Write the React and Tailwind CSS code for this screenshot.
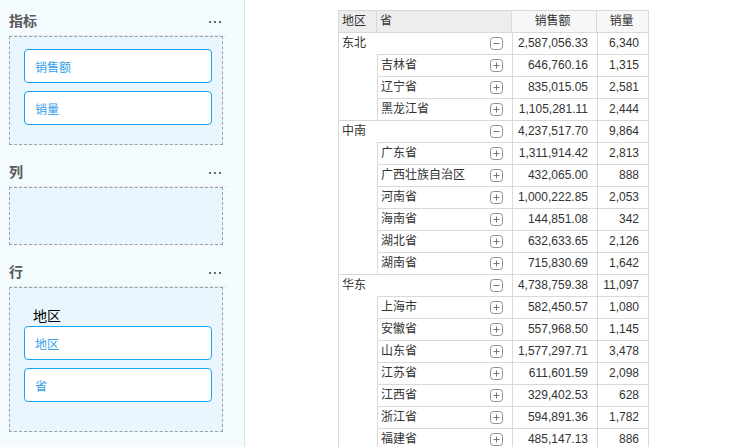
import React from "react";

const FONT = { fontFamily: '"Liberation Sans", "Noto Sans CJK SC", sans-serif' };

const data = [
  {
    name: "东北", sales: "2,587,056.33", qty: "6,340",
    children: [
      ["吉林省", "646,760.16", "1,315"],
      ["辽宁省", "835,015.05", "2,581"],
      ["黑龙江省", "1,105,281.11", "2,444"],
    ],
  },
  {
    name: "中南", sales: "4,237,517.70", qty: "9,864",
    children: [
      ["广东省", "1,311,914.42", "2,813"],
      ["广西壮族自治区", "432,065.00", "888"],
      ["河南省", "1,000,222.85", "2,053"],
      ["海南省", "144,851.08", "342"],
      ["湖北省", "632,633.65", "2,126"],
      ["湖南省", "715,830.69", "1,642"],
    ],
  },
  {
    name: "华东", sales: "4,738,759.38", qty: "11,097",
    children: [
      ["上海市", "582,450.57", "1,080"],
      ["安徽省", "557,968.50", "1,145"],
      ["山东省", "1,577,297.71", "3,478"],
      ["江苏省", "611,601.59", "2,098"],
      ["江西省", "329,402.53", "628"],
      ["浙江省", "594,891.36", "1,782"],
      ["福建省", "485,147.13", "886"],
    ],
  },
];

function Toggle({ plus }) {
  return (
    <svg width="13" height="13" viewBox="0 0 13 13" className="shrink-0">
      <rect x="0.5" y="0.5" width="12" height="12" rx="3" fill="white" stroke="#8f8f8f" />
      <line x1="3.5" y1="6.5" x2="9.5" y2="6.5" stroke="#777" />
      {plus && <line x1="6.5" y1="3.5" x2="6.5" y2="9.5" stroke="#777" />}
    </svg>
  );
}

function Dots() {
  return (
    <div className="flex gap-[3px] mb-[5px]">
      <span className="w-[2px] h-[2px] bg-[#666]" />
      <span className="w-[2px] h-[2px] bg-[#666]" />
      <span className="w-[2px] h-[2px] bg-[#666]" />
    </div>
  );
}

function SectionHeader({ title }) {
  return (
    <div className="w-[218px] h-[35px] flex items-end justify-between pb-[7px] pr-[6px] border-b border-[#e4eaee]">
      <span className="text-[14px] leading-[14px] font-bold text-[#595959]">{title}</span>
      <Dots />
    </div>
  );
}

function Item({ label }) {
  return (
    <div className="h-[34px] w-[188px] bg-white border border-[#17a2f0] rounded-[4px] flex items-center pl-[10px] pt-[3px] text-[12px] text-[#36a0ea]">
      {label}
    </div>
  );
}

export default function App() {
  return (
    <div className="h-[447px] w-[732px] overflow-hidden flex bg-white text-[#333]" style={FONT}>
      {/* Left panel */}
      <div className="w-[245px] h-full shrink-0 bg-[#f4fbff] border-r border-[#dde4ea] pl-[9px] pt-[1px]">
        <SectionHeader title="指标" />
        <div className="w-[214px] border border-dashed border-[#9aa0a6] bg-[#eaf6fe] pt-[12px] pb-[19px] pl-[14px] flex flex-col gap-[8px]">
          <Item label="销售额" />
          <Item label="销量" />
        </div>

        <div className="mt-[7px]">
          <SectionHeader title="列" />
        </div>
        <div className="w-[214px] h-[58px] border border-dashed border-[#9aa0a6] bg-[#eaf6fe]" />

        <div className="mt-[7px]">
          <SectionHeader title="行" />
        </div>
        <div className="w-[214px] h-[145px] border border-dashed border-[#9aa0a6] bg-[#eaf6fe] pt-[18px] pl-[14px] flex flex-col">
          <div className="h-[20px] pl-[9px] text-[14px] leading-[20px] text-black">地区</div>
          <div className="flex flex-col gap-[8px]">
            <Item label="地区" />
            <Item label="省" />
          </div>
        </div>
      </div>

      {/* Table */}
      <div className="pl-[93px] pt-[10px] text-[12px] leading-[21px]">
        <div className="w-[311px] border-l border-r border-t border-[#d9d9d9]">
          {/* header */}
          <div className="flex h-[22px] border-b border-[#d9d9d9]">
            <div className="w-[38px] bg-[#ededed] border-r border-[#d9d9d9] pl-[3px]">地区</div>
            <div className="w-[135px] bg-[#ededed] border-r border-[#d9d9d9] pl-[3px]">省</div>
            <div className="w-[85px] bg-[#f7f7f7] border-r border-[#d9d9d9] text-center pr-[3px]">销售额</div>
            <div className="w-[51px] bg-[#f7f7f7] text-center pr-[2px]">销量</div>
          </div>
          {data.map((r) => (
            <div key={r.name} className="border-b border-[#d9d9d9]">
              <div className="flex h-[21px]">
                <div className="w-[174px] border-r border-[#d9d9d9] flex items-center justify-between pl-[3px] pr-[9px]">
                  <span>{r.name}</span>
                  <Toggle />
                </div>
                <div className="w-[85px] border-r border-[#d9d9d9] text-right pr-[9px]">{r.sales}</div>
                <div className="w-[50px] text-right pr-[9px]">{r.qty}</div>
              </div>
              {r.children.map(([n, s, q]) => (
                <div key={n} className="flex">
                  <div className="w-[38px] shrink-0" />
                  <div className="flex h-[22px] border-t border-l border-[#d9d9d9]">
                    <div className="w-[135px] border-r border-[#d9d9d9] flex items-center justify-between pl-[3px] pr-[9px]">
                      <span>{n}</span>
                      <Toggle plus />
                    </div>
                    <div className="w-[85px] border-r border-[#d9d9d9] text-right pr-[9px]">{s}</div>
                    <div className="w-[50px] text-right pr-[9px]">{q}</div>
                  </div>
                </div>
              ))}
            </div>
          ))}
        </div>
      </div>
    </div>
  );
}
